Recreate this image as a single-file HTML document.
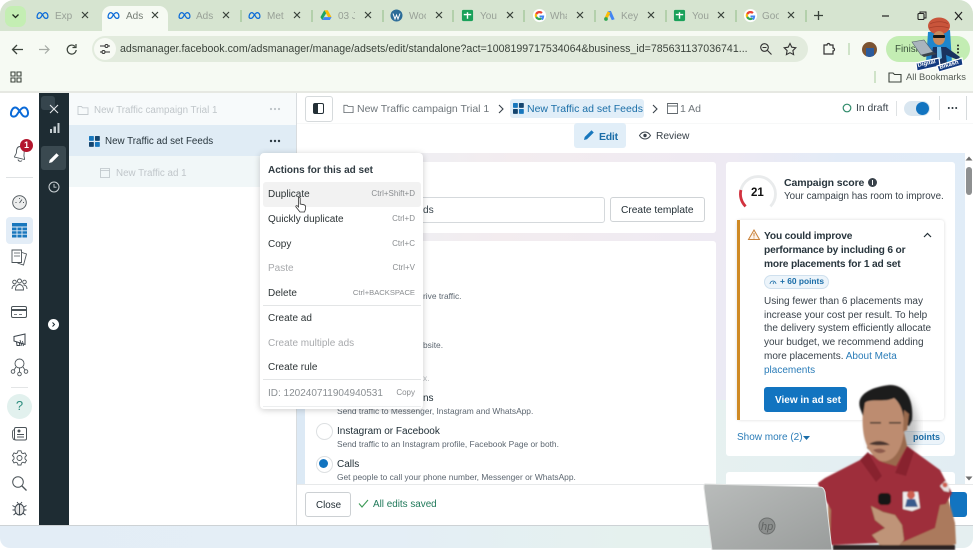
<!DOCTYPE html>
<html><head><meta charset="utf-8"><title>Ads Manager</title>
<style>
html,body{margin:0;padding:0;background:#fff}
#p{position:relative;width:973px;height:550px;overflow:hidden;background:#fff;font-family:"Liberation Sans","DejaVu Sans",sans-serif;color:#1c2b33}
#p div,#p svg{position:absolute}
.t{white-space:nowrap;line-height:1.2;transform:translateY(1px)}
.tab{font-size:10px;color:#98a097;top:10px;width:17px;overflow:hidden;filter:blur(.35px)}
.x{top:10px;width:10px;height:10px}
.sep{top:10px;width:2px;height:12px;background:#b3d0ab}
.m{font-size:10px;color:#2d3436;left:268px}
.k{font-size:8px;color:#8a8d90;right:558px;text-align:right}
.d{color:#a8aaad}
.s{font-size:8.4px;color:#5c6670}
.o{font-size:10px;color:#1c2b33;left:337px}
svg{overflow:visible}
</style></head><body><div id="p">
<svg width="0" height="0" style="left:0;top:0"><defs>
<symbol id="meta" viewBox="0 0 24 14"><path d="M2 9.500C2 5 4.500 1.800 7 1.800c3 0 5 4 7.500 7.800 1.300 2 2.500 2.800 4 2.800 2 0 3.500-1.500 3.500-4.200C22 4.800 20 1.800 17.300 1.800 14 1.800 11 7 9.500 9.500 8 12 6.800 12.400 5.300 12.400 3.300 12.400 2 11.200 2 9.500Z" fill="none" stroke="#0a6ad8" stroke-width="2.300"/></symbol>
<symbol id="xi" viewBox="0 0 10 10"><path d="M2 2l6 6M8 2l-6 6" stroke="#39423a" stroke-width="1.200" fill="none"/></symbol>
<symbol id="g" viewBox="0 0 16 16"><circle cx="8" cy="8" r="7" fill="#fff"/><path d="M8 5.600a2.400 2.400 0 0 1 1.700.7l1.700-1.700A5 5 0 0 0 3.500 5.700l2 1.500A2.700 2.700 0 0 1 8 5.600Z" fill="#ea4335"/><path d="M3.500 5.700a5 5 0 0 0 0 4.600l2-1.500a2.700 2.700 0 0 1 0-1.600Z" fill="#fbbc05"/><path d="M3.500 10.300A5 5 0 0 0 11.400 11.500l-1.900-1.400A2.700 2.700 0 0 1 5.500 8.800Z" fill="#34a853"/><path d="M13 8H8v2h2.900a2.500 2.500 0 0 1-1.400 1.500l1.900 1.400C12.400 12 13 10 13 8Z" fill="#4285f4"/></symbol>
<symbol id="sh" viewBox="0 0 14 14"><rect x="1" y="1" width="12" height="12" rx="1.500" fill="#1aa15a"/><path d="M7 3.500v7M3 6h8" stroke="#fff" stroke-width="1.500"/></symbol>
<symbol id="ads" viewBox="0 0 14 14"><path d="M5 2.500l3.500-.5 4 9-3 1Z" fill="#4285f4"/><path d="M5 2.500 1.500 10l2.700 1.500L8 4Z" fill="#fbbc05"/><circle cx="3.200" cy="10.800" r="2" fill="#34a853"/></symbol>
<symbol id="grid" viewBox="0 0 12 12"><rect x="0" y="0" width="5.300" height="5.300" rx=".8" fill="#1877bd"/><rect x="6.500" y="0" width="5.300" height="5.300" rx=".8" fill="#14456f"/><rect x="0" y="6.500" width="5.300" height="5.300" rx=".8" fill="#14456f"/><rect x="6.500" y="6.500" width="5.300" height="5.300" rx=".8" fill="#1877bd"/></symbol>
<symbol id="fold" viewBox="0 0 12 12"><path d="M1 2.500h3.500l1 1.300H11v6.700H1Z" fill="none" stroke="currentColor" stroke-width=".9"/></symbol>
</defs></svg>

<!-- chrome frame -->
<div style="left:0;top:0;width:973px;height:93px;background:#f6faf3;border-radius:14px 14px 0 0;overflow:hidden">
 <div style="left:0;top:0;width:973px;height:31px;background:#d6e4d0"></div>
 <div style="left:0;top:91px;width:973px;height:2px;background:#e6e8e2"></div>
</div>
<div style="left:5px;top:6px;width:21px;height:21px;background:#c4eeb3;border-radius:7px"></div>
<svg style="left:11px;top:12px" width="9" height="8"><path d="M1.500 2.500 4.500 5.500 7.500 2.500" fill="none" stroke="#1f2a1e" stroke-width="1.300"/></svg>
<div style="left:102px;top:6px;width:66px;height:26px;background:#f6faf3;border-radius:9px 9px 0 0"></div>

<svg style="left:36px;top:11px" width="13" height="9"><use href="#meta" width="13" height="9"/></svg><div class="t tab" style="left:55px">Expe</div><svg class="x" style="left:80px"><use href="#xi" width="10" height="10"/></svg>
<svg style="left:107px;top:11px" width="13" height="9"><use href="#meta" width="13" height="9"/></svg><div class="t tab" style="left:126px;color:#747c74">Ads</div><svg class="x" style="left:150px"><use href="#xi" width="10" height="10"/></svg>
<svg style="left:178px;top:11px" width="13" height="9"><use href="#meta" width="13" height="9"/></svg><div class="t tab" style="left:196px">Ads</div><svg class="x" style="left:221px"><use href="#xi" width="10" height="10"/></svg>
<div class="sep" style="left:240px"></div>
<svg style="left:248px;top:11px" width="13" height="9"><use href="#meta" width="13" height="9"/></svg><div class="t tab" style="left:267px">Met</div><svg class="x" style="left:292px"><use href="#xi" width="10" height="10"/></svg>
<div class="sep" style="left:311px"></div>
<svg style="left:320px;top:9px" width="12" height="12" viewBox="0 0 14 14"><path d="M5 1.500h4l4.500 8h-4Z" fill="#fbbc05"/><path d="M5 1.500.5 9.500l2 3.300 4.700-7.800Z" fill="#1fa463"/><path d="M4.800 9.500h8.700l-2 3.300H2.500Z" fill="#4285f4"/></svg><div class="t tab" style="left:338px">03 J</div><svg class="x" style="left:363px"><use href="#xi" width="10" height="10"/></svg>
<div class="sep" style="left:382px"></div>
<svg style="left:390px;top:9px" width="13" height="13"><circle cx="6.500" cy="6.500" r="6" fill="#2b6c98"/><path d="M3 4.500l2 5.500 1.500-4 1.500 4 2-5.500" fill="none" stroke="#fff" stroke-width="1"/></svg><div class="t tab" style="left:409px">Woc</div><svg class="x" style="left:434px"><use href="#xi" width="10" height="10"/></svg>
<div class="sep" style="left:452px"></div>
<svg style="left:461px;top:9px" width="13" height="13"><use href="#sh" width="13" height="13"/></svg><div class="t tab" style="left:480px">You</div><svg class="x" style="left:505px"><use href="#xi" width="10" height="10"/></svg>
<div class="sep" style="left:523px"></div>
<svg style="left:532px;top:8px" width="15" height="15"><use href="#g" width="15" height="15"/></svg><div class="t tab" style="left:550px">Wha</div><svg class="x" style="left:575px"><use href="#xi" width="10" height="10"/></svg>
<div class="sep" style="left:594px"></div>
<svg style="left:603px;top:9px" width="13" height="13"><use href="#ads" width="13" height="13"/></svg><div class="t tab" style="left:621px">Key</div><svg class="x" style="left:646px"><use href="#xi" width="10" height="10"/></svg>
<div class="sep" style="left:665px"></div>
<svg style="left:673px;top:9px" width="13" height="13"><use href="#sh" width="13" height="13"/></svg><div class="t tab" style="left:692px">You</div><svg class="x" style="left:716px"><use href="#xi" width="10" height="10"/></svg>
<div class="sep" style="left:735px"></div>
<svg style="left:743px;top:8px" width="15" height="15"><use href="#g" width="15" height="15"/></svg><div class="t tab" style="left:762px">Goo</div><svg class="x" style="left:786px"><use href="#xi" width="10" height="10"/></svg>
<div class="sep" style="left:805px"></div>
<svg style="left:813px;top:10px" width="11" height="11"><path d="M5.500 1v9M1 5.500h9" stroke="#39423a" stroke-width="1.300"/></svg>
<svg style="left:882px;top:11px" width="80" height="11"><path d="M0 5h7" stroke="#222" stroke-width="1.200"/><rect x="36" y="2.500" width="6" height="6" rx="1" fill="none" stroke="#222" stroke-width="1.100"/><path d="M38 2.500V1h6v6h-2" fill="none" stroke="#222" stroke-width="1"/><path d="M73 1l7 8M80 1l-7 8" stroke="#222" stroke-width="1.200"/></svg>

<!-- toolbar -->
<svg style="left:10px;top:42px" width="70" height="15"><path d="M13 7.500H3M7 3 2.500 7.500 7 12" fill="none" stroke="#3c443c" stroke-width="1.300"/><path d="M29 7.500h9M35 3.500l4 4-4 4" fill="none" stroke="#a5aaa4" stroke-width="1.200"/><path d="M65 4.500A4.500 4.500 0 1 0 66.200 8M66 2v3.500h-3.500" fill="none" stroke="#3c443c" stroke-width="1.200"/></svg>
<div style="left:92px;top:36px;width:716px;height:26px;background:#e2ebdd;border-radius:13px"></div>
<div style="left:94px;top:38px;width:22px;height:22px;background:#f7faf4;border-radius:11px"></div>
<svg style="left:99px;top:43px" width="12" height="12"><path d="M1 3h5M9 3h2M1 9h2M6 9h5" stroke="#333" stroke-width="1"/><circle cx="7.500" cy="3" r="1.500" fill="none" stroke="#333"/><circle cx="4.500" cy="9" r="1.500" fill="none" stroke="#333"/></svg>
<div class="t" style="left:120px;top:42px;font-size:10.600px;color:#3a423a;letter-spacing:.02px">adsmanager.facebook.com/adsmanager/manage/adsets/edit/standalone?act=1008199717534064&amp;business_id=785631137036741...</div>
<svg style="left:759px;top:42px" width="50" height="14"><circle cx="5.500" cy="5.500" r="3.800" fill="none" stroke="#333" stroke-width="1.100"/><path d="M8.500 8.500l4 4M3.500 5.500h4" stroke="#333" stroke-width="1.100"/><path d="M31 1.500l1.800 3.700 4 .6-2.900 2.800.7 4-3.600-1.900-3.600 1.900.7-4-2.900-2.800 4-.6Z" fill="none" stroke="#333" stroke-width="1.100"/></svg>
<svg style="left:822px;top:42px" width="14" height="14"><path d="M2 3h3a1.500 1.500 0 0 1 3 0h3v3a1.500 1.500 0 0 1 0 3v3H2Z" fill="none" stroke="#333" stroke-width="1.200"/></svg>
<div class="sep" style="left:848px;top:43px;background:#cfe3c8"></div>
<div style="left:862px;top:42px;width:15px;height:15px;border-radius:8px;background:#7b5332;overflow:hidden"><div style="left:4px;top:6px;width:8px;height:9px;background:#2b5b9c"></div></div>
<div style="left:886px;top:36px;width:84px;height:26px;background:#c3edb3;border-radius:13px"></div>
<div class="t" style="left:895px;top:43px;font-size:9.800px;color:#38503a">Finish</div>
<svg style="left:956px;top:44px" width="4" height="11"><circle cx="2" cy="1.500" r="1" fill="#222"/><circle cx="2" cy="5" r="1" fill="#222"/><circle cx="2" cy="8.500" r="1" fill="#222"/></svg>
<svg style="left:10px;top:71px" width="12" height="12"><path d="M1 1h4v4H1ZM7 1h4v4H7ZM1 7h4v4H1ZM7 7h4v4H7Z" fill="none" stroke="#3c443c" stroke-width="1.100"/></svg>
<div class="sep" style="left:874px;top:71px;height:12px;background:#cfe3c8"></div>
<svg style="left:888px;top:71px" width="14" height="12"><path d="M1 2h4l1.500 1.500H13V11H1Z" fill="none" stroke="#3c443c" stroke-width="1.100"/></svg>
<div class="t" style="left:906px;top:70px;font-size:9.400px;color:#555c55">All Bookmarks</div>

<!-- mascot logo -->
<svg style="left:922px;top:16px" width="50" height="56" viewBox="0 0 50 56">
<path d="M6 16 28 14 30 47H4Z" fill="#1e86cc"/>
<ellipse cx="17" cy="10" rx="11" ry="8.500" fill="#c9553b"/>
<path d="M8 8c5-3 14-3 18 0M7 12c6-2 14-2 20 0" fill="none" stroke="#a63e2a" stroke-width=".7"/>
<ellipse cx="17" cy="22" rx="6" ry="7" fill="#c98a5c"/>
<rect x="11" y="19" width="12" height="3" rx="1" fill="#151515"/>
<path d="M9 44 11 31h13l14 10-2 3-12-5 1 9H9Z" fill="#1a335f"/>
<path d="M15 31h4l1 11-3 2-2-3Z" fill="#6cb7e4"/>
<path d="M-10 26 2 24 11 36 -1 39Z" fill="#a9b4bd" stroke="#53606a" stroke-width=".6"/>
<path d="M-1 39 11 36 15 38 2 41Z" fill="#3b444c"/>
<path d="M-6 47 17 42 18 50-5 55Z" fill="#123a80" stroke="#fff" stroke-width="1.200"/>
<path d="M15 50 40 42 41 49 17 56Z" fill="#123a80" stroke="#fff" stroke-width="1.200"/>
<text x="-4" y="51" font-size="6" font-weight="700" fill="#fff" transform="rotate(-13 -4 51)" font-family="Liberation Sans">Digital</text>
<text x="18" y="53" font-size="6" font-weight="700" fill="#fff" transform="rotate(-16 18 53)" font-family="Liberation Sans">Bikash</text>
</svg>

<!-- left nav -->
<div style="left:0;top:93px;width:39px;height:432px;background:#fff"></div>
<svg style="left:9px;top:106px" width="21" height="12"><use href="#meta" width="21" height="12"/></svg>
<svg style="left:12px;top:144px" width="17" height="18"><path d="M8 2.500C5 2.500 4.500 5 4.500 8c0 2.500-2 3.500-2 5l10 2.500c.5-1.500-1-2.500-.5-5 .5-3 0-7-4-8ZM6 15.500a2.300 2.300 0 0 0 4 1" fill="none" stroke="#4b5358" stroke-width=".9"/></svg>
<div style="left:20px;top:139px;width:13px;height:13px;border-radius:7px;background:#b3162e"></div>
<div class="t" style="left:20px;top:139px;width:13px;text-align:center;font-size:9px;font-weight:700;color:#fff">1</div>
<div style="left:6px;top:177px;width:27px;height:1px;background:#dfe2e4"></div>
<svg style="left:12px;top:195px" width="15" height="15"><circle cx="7.500" cy="7.500" r="6.800" fill="#eceded" stroke="#4b5358" stroke-width=".9"/><path d="M7.500 8 10 4.500M3.500 7.500h1M11 7.500h1M7.500 3v1" stroke="#4b5358" stroke-width=".9"/></svg>
<div style="left:6px;top:217px;width:27px;height:27px;background:#e3edf7;border-radius:4px"></div>
<svg style="left:12px;top:223px" width="15" height="15"><rect x="0" y="0" width="15" height="3.500" fill="#1877bd"/><path d="M0 4.500h15v10H0Z" fill="#1877bd"/><path d="M0 7.800h15M0 11.200h15M5 4.500v10M10 4.500v10" stroke="#e3edf7" stroke-width=".9"/></svg>
<svg style="left:11px;top:249px" width="17" height="17"><path d="M1 1h9.500v12.500H1ZM11 3.500l4.500 1.500-3 11-6-2" fill="none" stroke="#4b5358" stroke-width=".9"/><path d="M3 4h6M3 7h6" stroke="#4b5358" stroke-width=".8"/></svg>
<svg style="left:11px;top:278px" width="17" height="13"><g fill="none" stroke="#4b5358" stroke-width=".9"><circle cx="8.500" cy="3" r="2"/><circle cx="3.500" cy="4" r="1.800"/><circle cx="13.500" cy="4" r="1.800"/><path d="M1 11c0-3 2-4 3.500-4M16 11c0-3-2-4-3.500-4M4.500 12c0-4 2-5.500 4-5.500s4 1.500 4 5.500Z"/></g></svg>
<svg style="left:11px;top:306px" width="16" height="12"><rect x=".5" y=".5" width="15" height="11" rx="1.500" fill="none" stroke="#4b5358"/><rect x="1" y="3" width="14" height="2" fill="#4b5358"/><path d="M3 8.500h3M8 8.500h3" stroke="#4b5358" stroke-width=".8"/></svg>
<svg style="left:13px;top:333px" width="14" height="14"><path d="M1 3.500 12 1v10.500L1 8ZM3.500 8.500 4 12.500h3L6 9" fill="none" stroke="#39424a" stroke-width="1"/><path d="M7 7 9 13M9.500 8l1 5" stroke="#39424a" stroke-width=".8"/></svg>
<svg style="left:10px;top:358px" width="19" height="19"><g fill="none" stroke="#4b5358" stroke-width=".9"><circle cx="9.500" cy="5.500" r="4.500"/><circle cx="3" cy="13.500" r="1.800"/><circle cx="9.500" cy="16" r="1.800"/><circle cx="16" cy="13.500" r="1.800"/><path d="M6 9 4 12M9.500 10v4M13 9l2 3"/></g></svg>
<div style="left:11px;top:387px;width:17px;height:1px;background:#e3e5e6"></div>
<div style="left:7px;top:394px;width:25px;height:25px;border-radius:13px;background:#e2f1ee"></div>
<div class="t" style="left:7px;top:397px;width:25px;text-align:center;font-size:13px;color:#2a8c7d">?</div>
<svg style="left:12px;top:427px" width="15" height="14"><rect x="2.500" y=".5" width="12" height="12.500" rx="1.500" fill="none" stroke="#4b5358"/><path d="M2.500 2.500C.5 3 .5 4 .5 7s0 5 2 6M5 10h7M5 7.500h7" fill="none" stroke="#4b5358" stroke-width=".9"/><circle cx="7" cy="4" r="1.500" fill="#4b5358"/></svg>
<svg style="left:12px;top:450px" width="15" height="15" viewBox="0 0 15 15"><path d="M6 .8h3l.5 2 1.500.8 2-.7 1.500 2.600-1.500 1.500v1.900l1.500 1.400-1.500 2.600-2-.7-1.500.8-.5 2H6l-.5-2-1.500-.8-2 .7L.5 10.300 2 8.900V7L.5 5.500 2 2.900l2 .7 1.500-.8Z" fill="none" stroke="#4b5358" stroke-width=".9"/><circle cx="7.500" cy="8" r="2.500" fill="none" stroke="#4b5358" stroke-width=".9"/></svg>
<svg style="left:12px;top:476px" width="15" height="15"><circle cx="6" cy="6" r="5.300" fill="none" stroke="#4b5358" stroke-width="1"/><path d="M10 10l4.500 4.500" stroke="#4b5358" stroke-width="1.300"/></svg>
<svg style="left:12px;top:501px" width="15" height="15"><ellipse cx="7.500" cy="8.500" rx="4.500" ry="5.500" fill="#e8e8e8" stroke="#39424a"/><path d="M7.500 3.500v10M3 6 .5 4.500M12 6l2.500-1.500M3 9H.5M12 9h2.500M4 12l-2.500 2M11 12l2.500 2M5 1l2 2.500M10 1 8 3.500" stroke="#39424a" stroke-width=".9" fill="none"/></svg>

<!-- dark rail -->
<div style="left:39px;top:93px;width:30px;height:432px;background:#1e2c33"></div>
<div style="left:41px;top:96px;width:14px;height:14px;background:#36454d;border-radius:3px"></div>
<svg style="left:49px;top:104px" width="10" height="10"><path d="M1 1l8 8M9 1 1 9" stroke="#e5e8ea" stroke-width="1.100"/></svg>
<svg style="left:49px;top:123px" width="11" height="10"><path d="M1 6h2v4H1ZM4.500 3.500H7V10H4.500ZM8.500 0h2v10h-2Z" fill="#c6ced2"/></svg>
<div style="left:41px;top:146px;width:25px;height:24px;background:#3a4950;border-radius:3px"></div>
<svg style="left:48px;top:152px" width="12" height="12"><path d="M1 11l.7-3L8.500 1.200l2.300 2.300L4 10.300Z" fill="#fff"/></svg>
<svg style="left:48px;top:181px" width="12" height="12"><circle cx="6" cy="6" r="5" fill="none" stroke="#ccd3d6"/><path d="M6 3v3.200h2.500" fill="none" stroke="#ccd3d6" stroke-width=".9"/></svg>
<div style="left:48px;top:319px;width:11px;height:11px;background:#fff;border-radius:6px"></div>
<svg style="left:51px;top:322px" width="5" height="5"><path d="M1.500 .5 3.500 2.500 1.500 4.500" fill="none" stroke="#1e2c33" stroke-width="1"/></svg>

<!-- tree panel -->
<div style="left:69px;top:93px;width:227px;height:432px;background:#fff"></div>
<div style="left:69px;top:93px;width:227px;height:32px;background:#f7fafb"></div>
<div style="left:69px;top:125px;width:227px;height:31px;background:#e0ecf5"></div>
<div style="left:69px;top:156px;width:227px;height:31px;background:#f1f7f8"></div>
<svg style="left:77px;top:104px;color:#c5cbcf" width="12" height="12"><use href="#fold" width="12" height="12"/></svg>
<div class="t" style="left:94px;top:104px;font-size:9.800px;color:#c0c6ca">New Traffic campaign Trial 1</div>
<svg style="left:89px;top:136px" width="11" height="11"><use href="#grid" width="11" height="11"/></svg>
<div class="t" style="left:105px;top:135px;font-size:9.800px;color:#27353d">New Traffic ad set Feeds</div>
<svg style="left:100px;top:168px" width="10" height="10"><path d="M.5.500h9v9h-9ZM.5 2.500h9" fill="none" stroke="#bcc3c7" stroke-width=".8"/></svg>
<div class="t" style="left:116px;top:167px;font-size:9.800px;color:#c0c6ca">New Traffic ad 1</div>
<svg style="left:269px;top:107px" width="12" height="4"><circle cx="2" cy="2" r="1.100" fill="#bcc2c6"/><circle cx="6" cy="2" r="1.100" fill="#bcc2c6"/><circle cx="10" cy="2" r="1.100" fill="#bcc2c6"/></svg>
<svg style="left:269px;top:139px" width="12" height="4"><circle cx="2" cy="2" r="1.200" fill="#2c3a42"/><circle cx="6" cy="2" r="1.200" fill="#2c3a42"/><circle cx="10" cy="2" r="1.200" fill="#2c3a42"/></svg>
<div style="left:296px;top:93px;width:1px;height:432px;background:#d8dcdf"></div>

<!-- main header -->
<div style="left:297px;top:93px;width:676px;height:60px;background:#fff"></div>
<div style="left:297px;top:123px;width:676px;height:1px;background:#f7f8f8"></div>
<div style="left:305px;top:96px;width:26px;height:24px;background:#fff;border:1px solid #d6dadc;border-radius:3px"></div>
<svg style="left:313px;top:103px" width="11" height="11"><rect x=".5" y=".5" width="10" height="10" rx="1.500" fill="#fff" stroke="#232f36"/><rect x=".5" y=".5" width="4.500" height="10" fill="#232f36"/></svg>
<svg style="left:343px;top:103px;color:#62696e" width="11" height="11"><use href="#fold" width="11" height="11"/></svg>
<div class="t" style="left:357px;top:102px;font-size:10.500px;color:#6e757a">New Traffic campaign Trial 1</div>
<svg style="left:498px;top:104px" width="6" height="10"><path d="M1 1l4 4-4 4" fill="none" stroke="#39424a" stroke-width="1.100"/></svg>
<div style="left:510px;top:99px;width:134px;height:19px;background:#e1eef8;border-radius:3px"></div>
<svg style="left:513px;top:103px" width="11" height="11"><use href="#grid" width="11" height="11"/></svg>
<div class="t" style="left:527px;top:102px;font-size:10.500px;color:#1b6fa8">New Traffic ad set Feeds</div>
<svg style="left:652px;top:104px" width="6" height="10"><path d="M1 1l4 4-4 4" fill="none" stroke="#39424a" stroke-width="1.100"/></svg>
<svg style="left:667px;top:103px" width="11" height="11"><path d="M.5.500h10v10H.5ZM.5 3h10" fill="none" stroke="#62696e" stroke-width=".9"/></svg>
<div class="t" style="left:680px;top:102px;font-size:10.500px;color:#6e757a">1 Ad</div>
<div style="left:574px;top:123px;width:52px;height:25px;background:#e1eef8;border-radius:3px"></div>
<svg style="left:583px;top:129px" width="12" height="12"><path d="M1 11l.7-3L8.500 1.200l2.300 2.300L4 10.300Z" fill="#1877bd"/></svg>
<div class="t" style="left:599px;top:130px;font-size:10.500px;color:#1a6da8;font-weight:700;letter-spacing:-.25px">Edit</div>
<svg style="left:639px;top:131px" width="12" height="9"><path d="M.5 4.500C2 2 4 1 6 1s4 1 5.500 3.500C10 7 8 8 6 8S2 7 .5 4.500Z" fill="none" stroke="#39424a"/><circle cx="6" cy="4.500" r="1.700" fill="#39424a"/></svg>
<div class="t" style="left:656px;top:130px;font-size:10.200px;color:#39424a">Review</div>
<svg style="left:842px;top:103px" width="10" height="10"><circle cx="5" cy="5" r="3.800" fill="none" stroke="#2f8a6a" stroke-width="1.200"/></svg>
<div class="t" style="left:856px;top:102px;font-size:10.400px;color:#39424a">In draft</div>
<div style="left:896px;top:101px;width:1px;height:15px;background:#dfe2e4"></div>
<div style="left:904px;top:101px;width:26px;height:15px;background:#d9e6f0;border-radius:8px"></div>
<div style="left:916px;top:102px;width:13px;height:13px;background:#1274c0;border-radius:7px"></div>
<div style="left:939px;top:96px;width:26px;height:24px;background:#fff;border-left:1px solid #d6dadc;border-right:1px solid #d6dadc"></div>
<svg style="left:947px;top:106px" width="11" height="4"><circle cx="1.800" cy="2" r="1" fill="#232f36"/><circle cx="5.500" cy="2" r="1" fill="#232f36"/><circle cx="9.200" cy="2" r="1" fill="#232f36"/></svg>

<!-- main body bg -->
<div style="left:297px;top:153px;width:668px;height:331px;background:linear-gradient(100deg,#eaf2f7 0%,#f3ecef 30%,#eeeaf3 60%,#e2ebf7 75%,#e0ecf7 100%)"></div>
<div style="left:297px;top:400px;width:668px;height:84px;background:linear-gradient(100deg,#dce9f5 0%,#e6f1f0 60%,#e2edf3 100%)"></div>

<!-- cards -->
<div style="left:305px;top:162px;width:411px;height:71px;background:#fff;border-radius:3px"></div>
<div style="left:305px;top:197px;width:298px;height:24px;background:#fff;border:1px solid #d5d9dc;border-radius:3px"></div>
<div class="t" style="left:423px;top:204px;font-size:10.200px;color:#3a464e">ds</div>
<div style="left:610px;top:197px;width:93px;height:23px;background:#fff;border:1px solid #cfd3d6;border-radius:3px"></div>
<div class="t" style="left:621px;top:204px;font-size:10.200px;color:#232f36">Create template</div>

<div style="left:305px;top:241px;width:411px;height:243px;background:#fff;border-radius:3px 3px 0 0"></div>
<div class="t s" style="left:423px;top:290px">rive traffic.</div>
<div class="t s" style="left:423px;top:339px">bsite.</div>
<div class="t s" style="left:423px;top:372px;color:#b5b9bc">x.</div>
<div class="t o" style="left:423px;top:392px">ns</div>
<div class="t s" style="left:337px;top:405px">Send traffic to Messenger, Instagram and WhatsApp.</div>
<div style="left:316px;top:423px;width:15px;height:15px;border:1px solid #dde0e2;border-radius:9px;background:#fff"></div>
<div class="t o" style="top:425px">Instagram or Facebook</div>
<div class="t s" style="left:337px;top:438px">Send traffic to an Instagram profile, Facebook Page or both.</div>
<div style="left:316px;top:456px;width:15px;height:15px;border:1px solid #dde0e2;border-radius:9px;background:#fff"></div>
<div style="left:319px;top:459px;width:9px;height:9px;border-radius:5px;background:#1274c0"></div>
<div class="t o" style="top:458px">Calls</div>
<div class="t s" style="left:337px;top:471px">Get people to call your phone number, Messenger or WhatsApp.</div>

<!-- right card -->
<div style="left:726px;top:162px;width:229px;height:294px;background:#fff;border-radius:3px"></div>
<svg style="left:738px;top:174px" width="40" height="40"><path d="M7.600 32.400A17.500 17.500 0 1 1 32.400 32.400" fill="none" stroke="#e9ebec" stroke-width="2.800"/><path d="M7.600 32.400A17.500 17.500 0 0 1 2.900 16" fill="none" stroke="#d2323f" stroke-width="2.800"/></svg>
<div class="t" style="left:751px;top:186px;font-size:11.500px;font-weight:700;color:#111">21</div>
<div class="t" style="left:784px;top:176px;font-size:10.500px;color:#28353d;font-weight:700;letter-spacing:-.1px">Campaign score</div>
<div style="left:868px;top:178px;width:9px;height:9px;border-radius:5px;background:#39424a"></div>
<div style="left:872px;top:180px;width:1px;height:5px;background:#fff"></div>
<div class="t" style="left:784px;top:190px;font-size:9.800px;color:#39424a">Your campaign has room to improve.</div>

<div style="left:737px;top:220px;width:207px;height:200px;background:#fff;box-shadow:0 0 3px rgba(0,0,0,.15);border-radius:3px"></div>
<div style="left:737px;top:220px;width:3px;height:200px;background:#cf8a25"></div>
<svg style="left:748px;top:229px" width="12" height="11"><path d="M6 1 11.500 10.500H.5Z" fill="#fdf4ec" stroke="#c9823a"/><path d="M6 4v3.500M6 8.500v1" stroke="#c9823a"/></svg>
<div class="t" style="left:764px;top:229px;font-size:10.200px;line-height:14px;color:#28353d;font-weight:700;letter-spacing:-.16px">You could improve<br>performance by including 6 or<br>more placements for 1 ad set</div>
<svg style="left:923px;top:232px" width="9" height="6"><path d="M1 5l3.500-3.500L8 5" fill="none" stroke="#232f36" stroke-width="1.200"/></svg>
<div style="left:764px;top:275px;width:63px;height:12px;background:#ecf4fa;border:1px solid #cfe0ee;border-radius:7px"></div>
<svg style="left:769px;top:279px" width="8" height="6"><path d="M1 5a3 3 0 1 1 6 0M4 5 5 3" fill="none" stroke="#1a6da8" stroke-width=".8"/></svg>
<div class="t" style="left:780px;top:275px;font-size:8.400px;color:#1a6da8;font-weight:700">+ 60 points</div>
<div class="t" style="left:764px;top:294px;font-size:10px;line-height:13.700px;color:#39424a">Using fewer than 6 placements may<br>increase your cost per result. To help<br>the delivery system efficiently allocate<br>your budget, we recommend adding<br>more placements. <span style="color:#2a7cb8">About Meta<br>placements</span></div>
<div style="left:764px;top:387px;width:83px;height:25px;background:#1274c0;border-radius:3px"></div>
<div class="t" style="left:775px;top:394px;font-size:10px;font-weight:700;color:#fff">View in ad set</div>
<div class="t" style="left:737px;top:431px;font-size:10px;color:#2a7cb8">Show more (2)</div>
<svg style="left:803px;top:436px" width="7" height="4"><path d="M0 0h7L3.500 4Z" fill="#1a6da8"/></svg>
<div style="left:900px;top:431px;width:43px;height:12px;background:#ecf4fa;border:1px solid #d8e7f2;border-radius:7px"></div>
<div class="t" style="left:913px;top:431px;font-size:9px;font-weight:700;color:#1a6da8">points</div>
<div style="left:726px;top:472px;width:229px;height:13px;background:#fff;border-radius:3px 3px 0 0"></div>

<!-- scrollbar -->
<div style="left:965px;top:153px;width:8px;height:331px;background:#fff"></div>
<svg style="left:965px;top:156px" width="8" height="5"><path d="M4 .5 7.500 4.500H.5Z" fill="#6e6e6e"/></svg>
<div style="left:966px;top:167px;width:6px;height:28px;background:#8e9091;border-radius:3px"></div>
<svg style="left:965px;top:476px" width="8" height="5"><path d="M.5.500h7L4 4.500Z" fill="#6e6e6e"/></svg>

<!-- footer -->
<div style="left:297px;top:484px;width:676px;height:41px;background:#fff;border-top:1px solid #e7e9ea;box-sizing:border-box"></div>
<div style="left:305px;top:492px;width:44px;height:23px;background:#fff;border:1px solid #ccd0d3;border-radius:3px"></div>
<div class="t" style="left:316px;top:499px;font-size:9.800px;color:#232f36">Close</div>
<svg style="left:358px;top:499px" width="11" height="9"><path d="M1 4.500l3 3.500 6-7" fill="none" stroke="#3d9a56" stroke-width="1.100"/></svg>
<div class="t" style="left:373px;top:498px;font-size:9.900px;color:#20795a">All edits saved</div>
<div style="left:950px;top:492px;width:17px;height:25px;background:#1274c0;border-radius:0 3px 3px 0"></div>

<!-- bottom strip -->
<div style="left:0;top:525px;width:973px;height:23px;background:linear-gradient(90deg,#e3edf6 0%,#e4eef6 40%,#e5f1ee 65%,#e5eff0 100%);border-radius:0 0 10px 10px;border-top:1px solid #cdd2d5;box-sizing:border-box"></div>

<!-- context menu -->
<div style="left:260px;top:153px;width:163px;height:256px;background:#fff;border-radius:4px;box-shadow:0 1px 7px rgba(0,0,0,.2)"></div>
<div class="t" style="left:268px;top:164px;font-size:10px;font-weight:700;color:#303b42;letter-spacing:0">Actions for this ad set</div>
<div style="left:263px;top:182px;width:158px;height:25px;background:#f2f2f2;border-radius:3px"></div>
<div class="t m" style="top:188px">Duplicate</div><div class="t k" style="top:188px;right:558px">Ctrl+Shift+D</div>
<div class="t m" style="top:213px">Quickly duplicate</div><div class="t k" style="top:213px">Ctrl+D</div>
<div class="t m" style="top:238px">Copy</div><div class="t k" style="top:238px">Ctrl+C</div>
<div class="t m d" style="top:262px">Paste</div><div class="t k" style="top:262px">Ctrl+V</div>
<div class="t m" style="top:287px">Delete</div><div class="t k" style="top:287px;font-size:7.600px">Ctrl+BACKSPACE</div>
<div style="left:263px;top:305px;width:158px;height:1px;background:#e3e5e6"></div>
<div class="t m" style="top:312px">Create ad</div>
<div class="t m d" style="top:337px">Create multiple ads</div>
<div class="t m" style="top:361px">Create rule</div>
<div style="left:263px;top:379px;width:158px;height:1px;background:#e3e5e6"></div>
<div class="t m" style="top:387px;color:#8a8f93">ID: 120240711904940531</div>
<div class="t k" style="top:387px">Copy</div>
<div style="left:263px;top:406px;width:158px;height:1px;background:#eceeef"></div>
<svg style="left:295px;top:196px" width="12" height="17"><path d="M3.500 1.500c1-.8 1.700 0 1.700 1V8l3.500.7c1.300.3 1.800 1 1.800 2v2.500L9.500 16H5L1 11c-.7-1 .5-1.800 1.500-1L3.500 11Z" fill="#fff" stroke="#333" stroke-width=".8"/></svg>

<!-- person -->
<svg style="left:690px;top:370px" width="283" height="180" viewBox="0 0 283 180">
<defs><linearGradient id="lap" x1="0" y1="0" x2="1" y2="1"><stop offset="0" stop-color="#b9bcbb"/><stop offset="1" stop-color="#9a9d9c"/></linearGradient>
<filter id="b1"><feGaussianBlur stdDeviation=".8"/></filter><filter id="b2"><feGaussianBlur stdDeviation="4"/></filter></defs>
<ellipse cx="203" cy="58" rx="25" ry="38" fill="#3a3a3a" opacity=".3" filter="url(#b2)"/>
<g filter="url(#b1)">
<path d="M138 132 146 135 146 172 138 172Z" fill="#ab7a5d"/>
<path d="M250 130 258 128 265 153 266 174 252 178 210 178 204 160 236 156Z" fill="#ab7a5d"/>
<path d="M128 113 135 108 170 90 178 83 205 95 217 76 250 100 262 123 256 134 250 135 245 158 213 172 140 175 141 140 130 120Z" fill="#9e2f3b"/>
<path d="M170 90 178 82 192 106 186 112ZM217 76 224 82 216 106 205 103Z" fill="#88242f"/>
<path d="M177 78 192 92 206 96 217 76 214 62 178 70Z" fill="#9a6a4d"/>
<path d="M173 40C171 65 176 82 190 91 203 94 212 80 214 62L215 40 204 28C195 33 180 28 175 33Z" fill="#bd8c70"/>
<path d="M170 38C166 25 180 17 200 15 215 15 224 28 222 50L219 56 214 54C214 42 210 33 204 28 195 33 180 28 175 33L173 46Z" fill="#1f1d1e"/>
<path d="M214 40 219 44 217 60 213 62Z" fill="#9a6a4d"/>
<path d="M179 74C185 70 194 70 200 75 193 75 186 76 179 74Z" fill="#4a362e"/>
<path d="M183 80C188 78 192 78 196 81 192 84 187 84 183 80Z" fill="#8d5a4b"/>
<rect x="180" y="52" width="11" height="1.600" fill="#4a3a30"/><rect x="199" y="52" width="12" height="1.600" fill="#4a3a30"/>
<rect x="188" y="123" width="13" height="12" rx="4" fill="#131313"/>
<path d="M213 122h15l2 16-8 3-9-2Z" fill="#eee"/>
<circle cx="221" cy="125" r="4" fill="#cd5f50"/>
<path d="M217 129h8l3 8h-13Z" fill="#375a8c"/>
<path d="M250 116l5-5 4 3 0 8-5-1Z" fill="#e7e2e2"/>
<circle cx="255" cy="115" r="2.500" fill="#cd5f50"/>
<path d="M181 136 193 142 205 145 212 155 214 170 208 177 190 175 182 165 195 158 185 150Z" fill="#bf9478" stroke="#9a6d52" stroke-width=".5"/>
<rect x="143" y="175" width="122" height="5" fill="#2a2020"/>
</g>
<path d="M15 114 130 117C133 117 134 119 135 122L142 180H22L14 118C14 115 14 114 15 114Z" fill="url(#lap)" stroke="#e0e2e1" stroke-width="1"/>
<ellipse cx="77" cy="156" rx="8" ry="8" fill="#8c8f8e" stroke="#6d706f"/>
<text x="71" y="160" font-size="11" font-style="italic" fill="#616463" font-family="Liberation Sans">hp</text>
</svg>
</div></body></html>
